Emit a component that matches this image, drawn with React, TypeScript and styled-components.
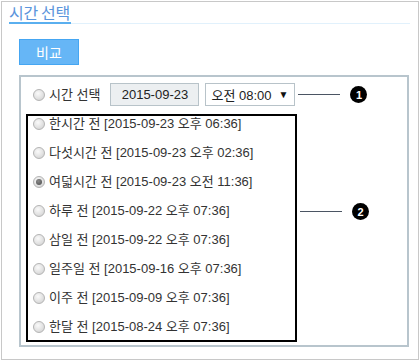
import React from "react";
import styled, { createGlobalStyle } from "styled-components";

const Global = createGlobalStyle`
  html, body { margin: 0; padding: 0; background: #fff; }
  body { font-family: "Liberation Sans", "Noto Sans CJK KR", sans-serif; color: #333; }
`;

const Frame = styled.div`
  box-sizing: border-box;
  margin: 1px;
  width: 418px;
  height: 359px;
  border: 1px solid #c8c8c8;
  display: flex;
  flex-direction: column;
`;

const Header = styled.div`
  margin: 0 8px 0 7px;
  border-bottom: 1px solid #e1f1fc;
  display: flex;
`;

const Title = styled.h1`
  margin: 0 0 -1px 0;
  font-family: "Noto Sans CJK KR", sans-serif;
  font-weight: 400;
  font-size: 16px;
  line-height: 20px;
  color: #5b95dc;
  border-bottom: 2px solid #5aafef;
  padding: 0 1px 0 0;
  letter-spacing: -0.3px;
`;

const CompareButton = styled.button`
  box-sizing: border-box;
  margin: 15px 0 0 17px;
  width: 60px;
  height: 26px;
  background: #66b6f6;
  border: 1px solid #45a6f2;
  color: #fff;
  font-family: "Noto Sans CJK KR", sans-serif;
  font-size: 14px;
  padding: 0;
  cursor: pointer;
`;

const Panel = styled.div`
  box-sizing: border-box;
  margin: 10px 0 0 17px;
  width: 390px;
  height: 272px;
  border: 2px solid #b8c5cd;
  padding: 6px 0 0 5px;
  display: flex;
  flex-direction: column;
`;

const TopRow = styled.div`
  display: flex;
  align-items: center;
  padding-left: 7px;
  height: 23px;
`;

const Radio = styled.span<{ $checked?: boolean }>`
  box-sizing: border-box;
  flex: none;
  width: 12px;
  height: 12px;
  border-radius: 50%;
  border: 1px solid #b4b4b4;
  background: radial-gradient(circle at 40% 35%, #fafafa 0%, #e2e2e2 55%, #cbcbcb 100%);
  display: flex;
  align-items: center;
  justify-content: center;
  &::after {
    content: "";
    display: ${(p) => (p.$checked ? "block" : "none")};
    width: 6px;
    height: 6px;
    border-radius: 50%;
    background: radial-gradient(circle at 40% 35%, #8a8a8a 0%, #4a4a4a 100%);
  }
`;

const Label = styled.span`
  margin-left: 4px;
  font-size: 13px;
  line-height: 16px;
  white-space: nowrap;
  color: #333;
`;

const DateBox = styled.div`
  box-sizing: border-box;
  margin-left: 10px;
  width: 89px;
  height: 23px;
  background: #eceff1;
  border: 1px solid #b8c3c9;
  font-size: 13px;
  display: flex;
  align-items: center;
  justify-content: center;
  color: #222;
`;

const SelectBox = styled.div`
  box-sizing: border-box;
  margin-left: 6px;
  width: 90px;
  height: 23px;
  background: #fff;
  border: 1px solid #b8c3c9;
  font-size: 13px;
  display: flex;
  align-items: center;
  padding: 0 6px 0 5px;
  color: #222;
  gap: 2px;
`;

const Caret = styled.span`
  margin-left: auto;
  font-size: 10px;
  color: #111;
`;

const Callout = styled.div<{ $offset?: number }>`
  display: flex;
  align-items: center;
  margin-top: ${(p) => p.$offset ?? 0}px;
  margin-left: 3px;
`;

const Leader = styled.span`
  width: 42px;
  height: 1px;
  background: #4b5563;
`;

const Badge = styled.span`
  margin-left: 10px;
  width: 17px;
  height: 17px;
  border-radius: 50%;
  background: #000;
  color: #fff;
  font-family: "Liberation Sans", sans-serif;
  font-weight: 700;
  font-size: 11px;
  display: flex;
  align-items: center;
  justify-content: center;
`;

const ListRow = styled.div`
  display: flex;
  align-items: flex-start;
  margin-top: 8px;
`;

const List = styled.div`
  box-sizing: border-box;
  width: 271px;
  height: 228px;
  border: 2px solid #000;
  padding: 0 0 5px 5px;
  display: flex;
  flex-direction: column;
  gap: 13px;
`;

const Option = styled.label`
  display: flex;
  align-items: center;
  height: 16px;
`;

const options = [
  { label: "한시간 전 [2015-09-23 오후 06:36]" },
  { label: "다섯시간 전 [2015-09-23 오후 02:36]" },
  { label: "여덟시간 전 [2015-09-23 오전 11:36]", checked: true },
  { label: "하루 전 [2015-09-22 오후 07:36]" },
  { label: "삼일 전 [2015-09-22 오후 07:36]" },
  { label: "일주일 전 [2015-09-16 오후 07:36]" },
  { label: "이주 전 [2015-09-09 오후 07:36]" },
  { label: "한달 전 [2015-08-24 오후 07:36]" },
];

export default function App() {
  return (
    <>
      <Global />
      <Frame>
        <Header>
          <Title>시간 선택</Title>
        </Header>
        <CompareButton>비교</CompareButton>
        <Panel>
          <TopRow>
            <Radio />
            <Label>시간 선택</Label>
            <DateBox>2015-09-23</DateBox>
            <SelectBox>
              오전 08:00
              <Caret>▼</Caret>
            </SelectBox>
            <Callout>
              <Leader />
              <Badge>1</Badge>
            </Callout>
          </TopRow>
          <ListRow>
            <List>
              {options.map((o) => (
                <Option key={o.label}>
                  <Radio $checked={o.checked} />
                  <Label>{o.label}</Label>
                </Option>
              ))}
            </List>
            <Callout $offset={89}>
              <Leader />
              <Badge>2</Badge>
            </Callout>
          </ListRow>
        </Panel>
      </Frame>
    </>
  );
}
